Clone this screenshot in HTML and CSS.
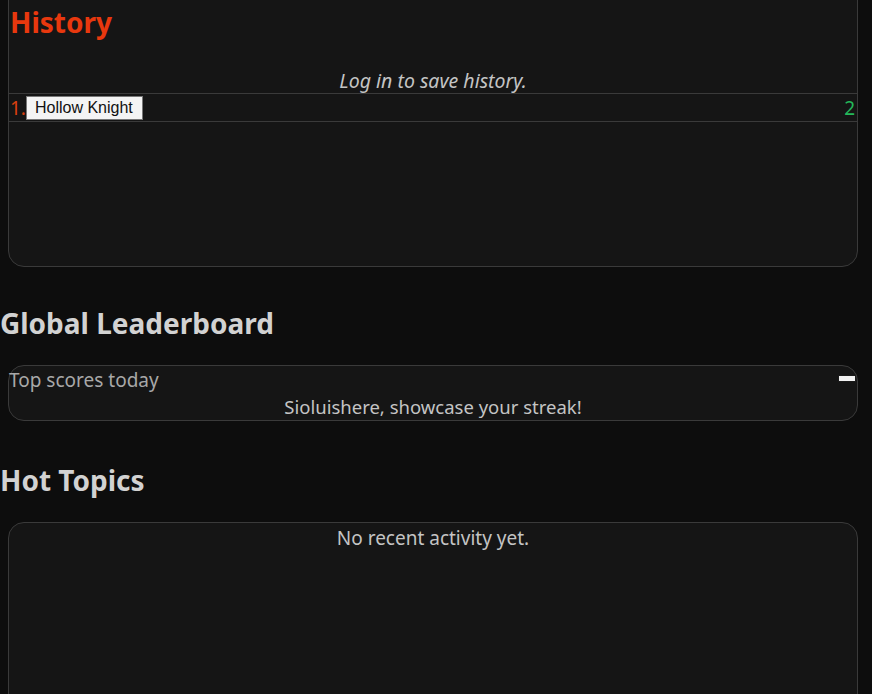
FILE: index.html
```html
<!DOCTYPE html>
<html>
<head>
<meta charset="utf-8">
<link rel="stylesheet" href="styles.css">
</head>
<body>
<section class="card history">
  <h2 class="history-title">History</h2>
  <p class="note">Log in to save history.</p>
  <div class="hist-row">
    <span class="idx">1.</span>
    <button class="game-btn">Hollow Knight</button>
    <span class="count">2</span>
  </div>
</section>

<h2 class="section-title lb-title">Global Leaderboard</h2>
<section class="card leaderboard">
  <div class="lb-head">
    <span class="lb-sub">Top scores today</span>
    <button class="toggle"></button>
  </div>
  <p class="lb-msg">Sioluishere, showcase your streak!</p>
</section>

<h2 class="section-title hot-title">Hot Topics</h2>
<section class="card topics">
  <p class="empty">No recent activity yet.</p>
</section>
</body>
</html>
```
FILE: styles.css
```css
html, body {
  margin: 0;
  padding: 0;
  background: #0d0d0d;
  font-family: "Noto Sans", "Open Sans", sans-serif;
  color: #c8c8c8;
  overflow: hidden;
}

.card {
  background: #151515;
  border: 1px solid #3a3a3a;
  border-radius: 16px;
  margin: 0 14px 0 8px;
  box-sizing: border-box;
}

.history {
  margin-top: -40px;
  padding-top: 44px;
  height: 307px;
}

.history-title {
  margin: 0;
  padding-left: 1px;
  font-size: 28px;
  line-height: 34px;
  font-weight: 700;
  color: #e8380e;
}

.note {
  margin: 29px 0 0;
  text-align: center;
  font-style: italic;
  font-size: 19.5px;
  line-height: 25px;
  color: #c4c4c4;
}

.hist-row {
  display: flex;
  align-items: center;
  border-top: 1px solid #3a3a3a;
  border-bottom: 1px solid #3a3a3a;
  height: 29px;
  box-sizing: border-box;
  padding: 0 2px 0 1px;
  font-size: 19px;
}

.idx {
  color: #d8400f;
}

.game-btn {
  font-family: "Liberation Sans", Arial, sans-serif;
  font-size: 16px;
  height: 24px;
  padding: 0 9px 0 8px;
  margin-left: 0;
  background: #f4f4f4;
  color: #111;
  border: 1px solid #777;
  border-radius: 0;
}

.count {
  margin-left: auto;
  color: #24b85a;
}

.section-title {
  margin: 0;
  font-size: 28px;
  line-height: 34px;
  font-weight: 700;
  color: #d2d2d2;
}

.lb-title {
  margin-top: 39px;
}

.leaderboard {
  margin-top: 25px;
  height: 56px;
}

.lb-head {
  display: flex;
  align-items: center;
  justify-content: space-between;
  height: 28px;
}

.lb-sub {
  font-size: 19px;
  line-height: 28px;
  color: #a8a8a8;
}

.toggle {
  width: 18px;
  height: 7px;
  padding: 0;
  margin: -4px 1px 0 0;
  background: #f2f2f2;
  border: 1px solid #1a1a1a;
  border-radius: 0;
}

.lb-msg {
  margin: 0;
  text-align: center;
  font-size: 18.5px;
  line-height: 26px;
  color: #c4c4c4;
}

.hot-title {
  margin-top: 42px;
}

.topics {
  margin-top: 25px;
  height: 240px;
}

.empty {
  margin: 2px 0 0;
  text-align: center;
  font-size: 19px;
  line-height: 26px;
  color: #c4c4c4;
}
```
